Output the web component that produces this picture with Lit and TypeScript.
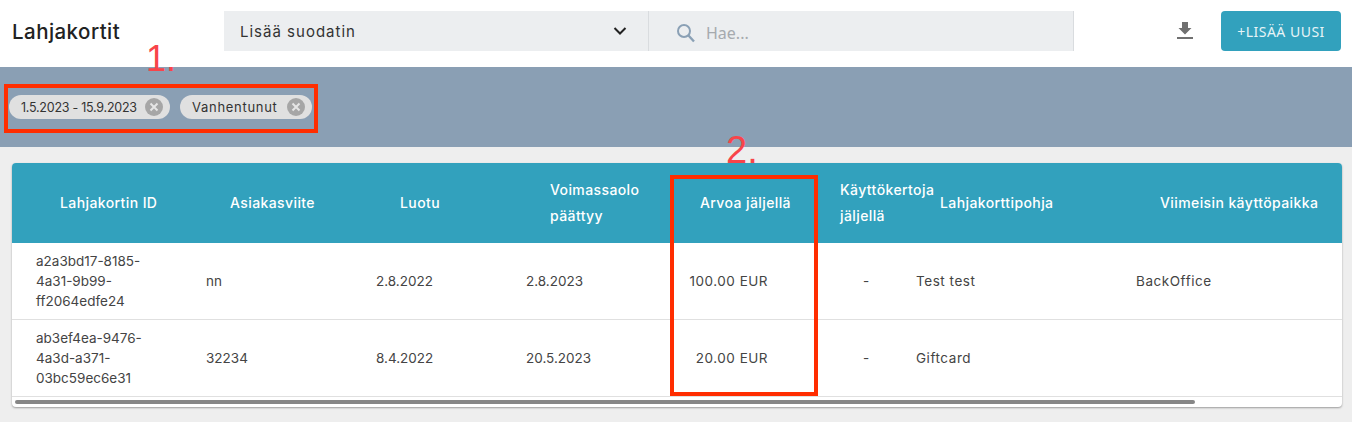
import { LitElement, html, css } from "lit";
import { customElement } from "lit/decorators.js";

const rows = [
  { id: ["a2a3bd17-8185-", "4a31-9b99-", "ff2064edfe24"], ref: "nn", created: "2.8.2022", ends: "2.8.2023", value: "100.00 EUR", uses: "-", tpl: "Test test", place: "BackOffice" },
  { id: ["ab3ef4ea-9476-", "4a3d-a371-", "03bc59ec6e31"], ref: "32234", created: "8.4.2022", ends: "20.5.2023", value: "20.00 EUR", uses: "-", tpl: "Giftcard", place: "" },
];

@customElement("app-root")
export class AppRoot extends LitElement {
  static styles = css`
    :host { display: block; position: relative; width: 1352px; height: 422px; overflow: hidden; background: #eeeeee; font-family: Inter, "Noto Sans", sans-serif; color: #333; }
    * { box-sizing: border-box; }
    .top { display: flex; align-items: center; height: 67px; background: #fff; padding: 0 11px 5px 12px; }
    .title { width: 212px; font-size: 20.5px; font-weight: 500; letter-spacing: 0.45px; color: #222; }
    .select { width: 425px; height: 40px; background: #eceef0; border-right: 1px solid #d9dcdf; display: flex; align-items: center; justify-content: space-between; padding: 0 21px 0 16px; font-size: 15px; letter-spacing: 1px; color: #333; }
    .search { width: 425px; height: 40px; background: #eceef0; border-right: 1px solid #d9dcdf; display: flex; align-items: center; gap: 10px; padding: 3px 0 0 27px; font-size: 16px; color: #a6aaae; font-family: "Noto Sans", sans-serif; }
    .dl { margin-left: 101px; width: 20px; height: 20px; display: flex; }
    .add { margin-left: 26px; width: 120px; height: 40px; background: #32a1bd; border-radius: 4px; color: #e6f4f7; font-size: 14px; letter-spacing: 0.5px; display: flex; align-items: center; justify-content: center; font-family: "Noto Sans", sans-serif; }
    .filters { height: 80px; background: #8a9fb4; display: flex; align-items: center; gap: 10px; padding-left: 9px; }
    .chip { height: 24px; border-radius: 12px; background: #e0e0e0; display: flex; align-items: center; justify-content: space-between; padding: 0 7px 0 12px; font-size: 13px; letter-spacing: 0.7px; color: #333; white-space: nowrap; }
    .c1 { width: 161px; font-size: 12.5px; letter-spacing: -0.25px; }
    .c2 { width: 132px; }
    .x { width: 18px; height: 18px; display: flex; }
    .card { margin: 16px 10px 0 12px; height: 244px; background: #fff; border-radius: 4px; overflow: hidden; box-shadow: 0 1px 2px rgba(0,0,0,.35); }
    .grid { display: grid; grid-template-columns: 170px 170px 150px 150px 140px 100px 220px 206px; padding-left: 24px; }
    .head { height: 80px; background: #32a1bd; color: #fff; font-size: 14px; font-weight: 500; letter-spacing: 0.4px; line-height: 26px; align-items: center; }
    .head span { padding-left: 24px; white-space: nowrap; }
    .row { height: 77px; align-items: center; font-size: 13.5px; line-height: 20px; color: #444; border-bottom: 1px solid #e0e0e0; }
    .txt { letter-spacing: 0.55px; }
    .val { text-align: right; padding-right: 48px; letter-spacing: 0.5px; }
    .mid { text-align: center; }
    .track { padding: 3px 0 0 3px; }
    .thumb { width: 1180px; height: 4px; border-radius: 2px; background: #868686; }
    .mark { position: absolute; border: 4px solid #ff2d00; }
    .m1 { left: 4px; top: 84px; width: 314px; height: 49px; }
    .m2 { left: 670px; top: 175px; width: 148px; height: 221px; }
    .num { position: absolute; font-family: "Liberation Sans", sans-serif; font-size: 36px; line-height: 36px; color: #f8444a; }
    .n1 { left: 146px; top: 41px; }
    .n2 { left: 726px; top: 132px; font-size: 38px; }
  `;

  render() {
    return html`
      <div class="top">
        <div class="title">Lahjakortit</div>
        <div class="select">
          <span>Lisää suodatin</span>
          <svg width="14" height="10" viewBox="0 0 14 10"><path d="M1.5 2 7 7.5 12.5 2" fill="none" stroke="#222" stroke-width="2"/></svg>
        </div>
        <div class="search">
          <svg width="20" height="20" viewBox="0 0 20 20"><circle cx="8" cy="8" r="6" fill="none" stroke="#8aa0b5" stroke-width="2"/><path d="M12.5 12.5 18 18.5" stroke="#8aa0b5" stroke-width="2.4"/></svg>
          <span>Hae...</span>
        </div>
        <div class="dl">
          <svg width="20" height="20" viewBox="0 0 20 20"><path d="M7 1h6v6h3.5L10 13.5 3.5 7H7zM2 16h16v2H2z" fill="#707070"/></svg>
        </div>
        <div class="add">+LISÄÄ UUSI</div>
      </div>
      <div class="filters">
        <div class="chip c1"><span>1.5.2023 - 15.9.2023</span>${this.closeIcon()}</div>
        <div class="chip c2"><span>Vanhentunut</span>${this.closeIcon()}</div>
      </div>
      <div class="card">
        <div class="grid head">
          <span>Lahjakortin ID</span>
          <span>Asiakasviite</span>
          <span>Luotu</span>
          <span>Voimassaolo<br />päättyy</span>
          <span>Arvoa jäljellä</span>
          <span>Käyttökertoja<br />jäljellä</span>
          <span>Lahjakorttipohja</span>
          <span>Viimeisin käyttöpaikka</span>
        </div>
        ${rows.map(r => html`
          <div class="grid row">
            <div>${r.id.map(l => html`${l}<br />`)}</div>
            <div>${r.ref}</div>
            <div>${r.created}</div>
            <div>${r.ends}</div>
            <div class="val">${r.value}</div>
            <div class="mid">${r.uses}</div>
            <div class="txt">${r.tpl}</div>
            <div class="txt">${r.place}</div>
          </div>`)}
        <div class="track"><div class="thumb"></div></div>
      </div>
      <div class="mark m1"></div>
      <div class="mark m2"></div>
      <div class="num n1">1.</div>
      <div class="num n2">2.</div>
    `;
  }

  closeIcon() {
    return html`<span class="x"><svg width="18" height="18" viewBox="0 0 18 18"><circle cx="9" cy="9" r="9" fill="#a6a6a6"/><path d="M5.5 5.5l7 7M12.5 5.5l-7 7" stroke="#e6e6e6" stroke-width="2"/></svg></span>`;
  }
}
